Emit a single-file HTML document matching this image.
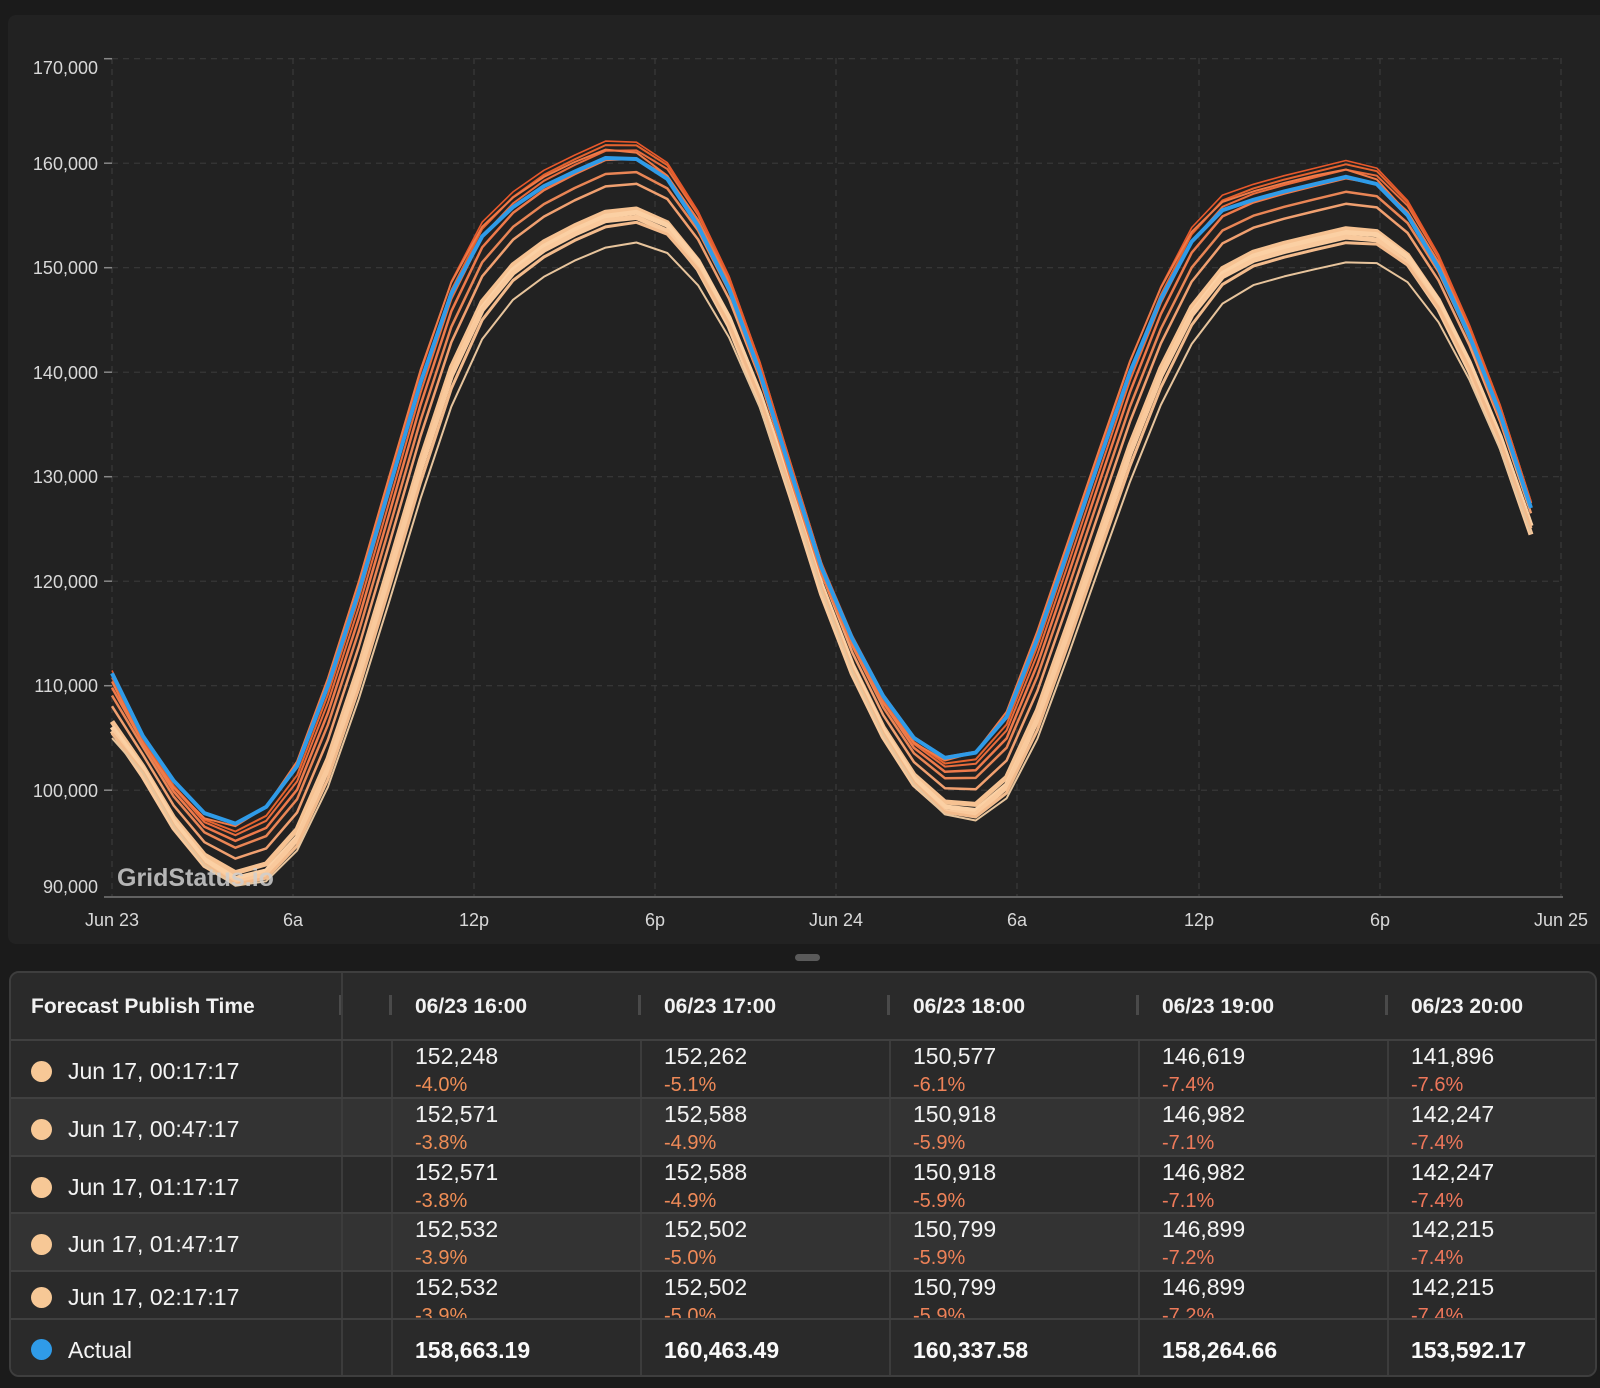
<!DOCTYPE html>
<html><head><meta charset="utf-8">
<style>
*{box-sizing:border-box;margin:0;padding:0}
body{width:1600px;height:1388px;background:#1b1b1b;font-family:"Liberation Sans",Arial,sans-serif;color:#eee;position:relative;overflow:hidden}
#panel{position:absolute;left:8px;top:15px;width:1592px;height:929px;background:#222;border-radius:8px 0 0 8px}
svg{position:absolute;left:0;top:0}
.handle{position:absolute;left:795px;top:954px;width:25px;height:7px;border-radius:4px;background:#5a5a5a}
#tbl{position:absolute;left:9px;top:971px;width:1588px;height:406px;background:#2a2a2a;border:2px solid #3e3e3e;border-radius:10px;overflow:hidden}
.row{position:absolute;left:0;width:1600px;border-top:2px solid #404040;overflow:hidden}
.cell{position:absolute;top:0;height:100%;overflow:hidden}
.vl{position:absolute;top:0;width:2px;height:100%;background:#3c3c3c}
.hd{font-weight:bold;font-size:21px;color:#f2f2f2;position:absolute;top:24px}
.hb{position:absolute;top:24px;width:3px;height:20px;background:#4a4a4a}
.num{position:absolute;left:22px;top:2px;font-size:23px;color:#f4f4f4}
.pct{position:absolute;left:22px;top:33px;font-size:20px}
.lab{position:absolute;left:57px;font-size:23px;color:#f4f4f4}
.dot{position:absolute;left:20px;width:21px;height:21px;border-radius:50%;background:#f7c896}
.act{font-weight:bold;font-size:23px;position:absolute;left:22px;top:17px;color:#fafafa}
</style></head><body>
<div id="panel"></div>
<svg id="ch" width="1600" height="950" xmlns="http://www.w3.org/2000/svg">
<g stroke="#3a3a3a" stroke-width="1.2" stroke-dasharray="6,5" fill="none">
<line x1="112" y1="58.7" x2="1561" y2="58.7"/><line x1="112" y1="163.2" x2="1561" y2="163.2"/><line x1="112" y1="267.7" x2="1561" y2="267.7"/><line x1="112" y1="372.2" x2="1561" y2="372.2"/><line x1="112" y1="476.7" x2="1561" y2="476.7"/><line x1="112" y1="581.2" x2="1561" y2="581.2"/><line x1="112" y1="685.7" x2="1561" y2="685.7"/><line x1="112" y1="790.2" x2="1561" y2="790.2"/>
<line x1="112" y1="58" x2="112" y2="896"/><line x1="293" y1="58" x2="293" y2="896"/><line x1="474" y1="58" x2="474" y2="896"/><line x1="655" y1="58" x2="655" y2="896"/><line x1="836" y1="58" x2="836" y2="896"/><line x1="1017" y1="58" x2="1017" y2="896"/><line x1="1199" y1="58" x2="1199" y2="896"/><line x1="1380" y1="58" x2="1380" y2="896"/><line x1="1561" y1="58" x2="1561" y2="896"/>
</g>
<line x1="104" y1="897" x2="1563" y2="897" stroke="#777" stroke-width="1.5"/>
<g stroke="#888" stroke-width="1.5"><line x1="104" y1="58.7" x2="112" y2="58.7"/><line x1="104" y1="163.2" x2="112" y2="163.2"/><line x1="104" y1="267.7" x2="112" y2="267.7"/><line x1="104" y1="372.2" x2="112" y2="372.2"/><line x1="104" y1="476.7" x2="112" y2="476.7"/><line x1="104" y1="581.2" x2="112" y2="581.2"/><line x1="104" y1="685.7" x2="112" y2="685.7"/><line x1="104" y1="790.2" x2="112" y2="790.2"/></g>
<g font-size="18" fill="#d8d8d8" text-anchor="end" font-family="Liberation Sans, sans-serif">
<text x="98" y="74">170,000</text><text x="98" y="170">160,000</text><text x="98" y="274">150,000</text><text x="98" y="379">140,000</text><text x="98" y="483">130,000</text><text x="98" y="588">120,000</text><text x="98" y="692">110,000</text><text x="98" y="797">100,000</text><text x="98" y="893">90,000</text>
</g>
<g font-size="18" fill="#d8d8d8" text-anchor="middle" font-family="Liberation Sans, sans-serif">
<text x="112" y="926">Jun 23</text><text x="293" y="926">6a</text><text x="474" y="926">12p</text><text x="655" y="926">6p</text><text x="836" y="926">Jun 24</text><text x="1017" y="926">6a</text><text x="1199" y="926">12p</text><text x="1380" y="926">6p</text><text x="1561" y="926">Jun 25</text>
</g>
<g id="lines" fill="none" stroke-linejoin="round"></g>
<text x="117" y="886" font-size="25" font-weight="bold" fill="#cfcfcf" fill-opacity="0.85" font-family="Liberation Sans, sans-serif">GridStatus.io</text>
</svg>
<div class="handle"></div>

<div id="tbl">
 <div class="row" style="top:-2px;height:68px;border-top:none;background:#2a2a2a">
  <div class="hd" style="left:20px">Forecast Publish Time</div>
  <div class="hb" style="left:328px"></div><div class="hb" style="left:378px"></div>
  <div class="hd" style="left:404px">06/23 16:00</div><div class="hb" style="left:627px"></div>
  <div class="hd" style="left:653px">06/23 17:00</div><div class="hb" style="left:876px"></div>
  <div class="hd" style="left:902px">06/23 18:00</div><div class="hb" style="left:1125px"></div>
  <div class="hd" style="left:1151px">06/23 19:00</div><div class="hb" style="left:1374px"></div>
  <div class="hd" style="left:1400px">06/23 20:00</div>
  <div class="vl" style="left:330px"></div>
 </div>
 <div id="body"></div>
</div>

<script>
var B=[111.2,105.2,100.9,97.8,96.8,98.4,102.3,110,119,129,139,147.5,153,155.8,157.8,159.2,160.5,160.4,158.5,154,148,140,130.5,121.3,114.5,109,105,103.1,103.6,107,114.5,123,131.5,140,147,152.5,155.5,156.5,157.3,158,158.7,158,155,150,143.5,136,127];
function X(i){return 112+i*(1531-112)/(B.length-1);}
function Y(v){return 58.7+(170-v)*10.45;}
function val(t){t=Math.max(0,Math.min(B.length-1,t));var i=Math.floor(t),f=t-i;if(i>=B.length-1)return B[B.length-1];return B[i]*(1-f)+B[i+1]*f;}
var g=document.getElementById('lines');var out='';
var F=[
[0.3,0.97,-5,'#f6c292',5],[0.35,0.968,-5.6,'#fbd0a4',5],[0.3,0.965,-6,'#f9c99c',5],[0.4,0.962,-6.2,'#f3bb8c',3],
[0.45,0.95,-6.4,'#e7c49c',2],[0.25,0.985,-3.6,'#f0a070',2.5],[0.2,0.992,-2.5,'#e98555',2.5],
[0.15,1.0,-1.8,'#ee7a4b',2.5],[0.1,1.005,-1.2,'#e96c3d',2],[0.05,1.008,-0.8,'#e5632f',2],[0,1.01,0,'#e8582b',1.6],[-0.1,1.005,-0.4,'#f07a48',2]
];
F.forEach(function(p){var d='';
 for(var h=0;h<=46;h++){
  var v=val(h-p[0]); var hi=(v-97)/(160-97); v=v*(hi*p[1]+(1-hi))+(1-hi)*p[2];
  d+=(h?'L':'M')+X(h).toFixed(1)+' '+Y(v).toFixed(1);}
 out+='<path d="'+d+'" stroke="'+p[3]+'" stroke-width="'+p[4]+'"/>';});
var d='';for(var h=0;h<B.length;h++)d+=(h?'L':'M')+X(h).toFixed(1)+' '+Y(B[h]).toFixed(1);
out+='<path d="'+d+'" stroke="#2f9be8" stroke-width="4"/>';
g.innerHTML=out;

var rows=[
['Jun 17, 00:17:17',['152,248','-4.0%'],['152,262','-5.1%'],['150,577','-6.1%'],['146,619','-7.4%'],['141,896','-7.6%']],
['Jun 17, 00:47:17',['152,571','-3.8%'],['152,588','-4.9%'],['150,918','-5.9%'],['146,982','-7.1%'],['142,247','-7.4%']],
['Jun 17, 01:17:17',['152,571','-3.8%'],['152,588','-4.9%'],['150,918','-5.9%'],['146,982','-7.1%'],['142,247','-7.4%']],
['Jun 17, 01:47:17',['152,532','-3.9%'],['152,502','-5.0%'],['150,799','-5.9%'],['146,899','-7.2%'],['142,215','-7.4%']],
['Jun 17, 02:17:17',['152,532','-3.9%'],['152,502','-5.0%'],['150,799','-5.9%'],['146,899','-7.2%'],['142,215','-7.4%']]];
var tops=[66,124,182,239,297],hs=[58,58,57,58,48];
var cols=[380,629,878,1127,1376];var pc=['#f08e56','#f08a58','#ef8258','#ee7a5a','#ee765a'];
var html='';
rows.forEach(function(r,i){
 html+='<div class="row" style="top:'+tops[i]+'px;height:'+hs[i]+'px;background:'+(i%2?'#333':'#2a2a2a')+'">';
 html+='<div class="dot" style="top:'+(hs[i]/2-9)+'px"></div><div class="lab" style="top:'+(hs[i]/2-12)+'px">'+r[0]+'</div>';
 html+='<div class="vl" style="left:330px"></div>';
 for(var c=0;c<5;c++){html+='<div class="vl" style="left:'+cols[c]+'px"></div><div class="cell" style="left:'+(cols[c]+2)+'px;width:247px"><div class="num">'+r[c+1][0]+'</div><div class="pct" style="color:'+pc[c]+'">'+r[c+1][1]+'</div></div>';}
 html+='</div>';});
var A=['158,663.19','160,463.49','160,337.58','158,264.66','153,592.17'];
html+='<div class="row" style="top:345px;height:62px;background:#2a2a2a"><div class="dot" style="top:19px;background:#2f9be8"></div><div class="lab" style="top:17px">Actual</div><div class="vl" style="left:330px"></div>';
for(var c=0;c<5;c++)html+='<div class="vl" style="left:'+cols[c]+'px"></div><div class="cell" style="left:'+(cols[c]+2)+'px;width:247px"><div class="act">'+A[c]+'</div></div>';
html+='</div>';
document.getElementById('body').innerHTML=html;
</script>
</body></html>
